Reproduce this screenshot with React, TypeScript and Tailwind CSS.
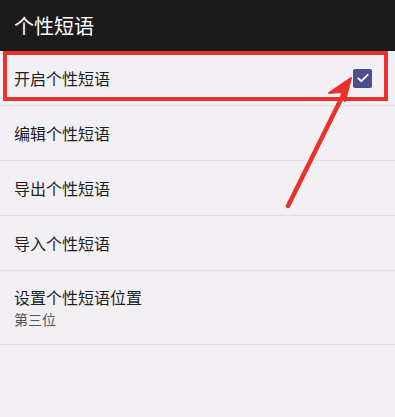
import React from 'react';

const font = { fontFamily: '"Noto Sans CJK SC", "Noto Sans", sans-serif' };

type RowProps = {
  title: string;
  sub?: string;
  checked?: boolean;
};

const Row = ({ title, sub, checked }: RowProps) => (
  <div className={`flex items-center justify-between border-b border-[#e3e0e6] pl-[14px] pr-[23px] ${sub ? 'h-[74px]' : 'h-[55px]'}`}>
    <div className="flex flex-col">
      <p className="text-[16px] leading-[23px] text-[#1f1f1f]">{title}</p>
      {sub && <p className="text-[14px] leading-[20px] text-[#555]">{sub}</p>}
    </div>
    {checked && (
      <div className="flex h-[19px] w-[19px] items-center justify-center rounded-[2px] bg-[#4b4f8e]">
        <svg width="14" height="14" viewBox="0 0 24 24" fill="none" stroke="#fff" strokeWidth="3.2" strokeLinecap="round" strokeLinejoin="round">
          <path d="M4 12.5l5 5L20 6.5" />
        </svg>
      </div>
    )}
  </div>
);

const App = () => {
  const rows: RowProps[] = [
    { title: '开启个性短语', checked: true },
    { title: '编辑个性短语' },
    { title: '导出个性短语' },
    { title: '导入个性短语' },
    { title: '设置个性短语位置', sub: '第三位' },
  ];

  return (
    <div className="relative h-[417px] w-[395px] overflow-hidden bg-[#f2f0f4]" style={font}>
      <div className="flex h-[51px] items-center bg-[#1b1b1b] pl-[14px]">
        <h1 className="text-[20px] leading-none text-white">个性短语</h1>
      </div>
      {rows.map((row) => (
        <Row key={row.title} {...row} />
      ))}
      {/* annotation: red box + arrow */}
      <div className="absolute left-[3px] top-[51px] h-[50px] w-[385px] border-[4px] border-[#e8322b]" />
      <svg className="absolute left-0 top-0" width="395" height="417" viewBox="0 0 395 417">
        <line x1="288" y1="206" x2="347" y2="87" stroke="#e8322b" strokeWidth="4.5" strokeLinecap="round" />
        <path d="M351 78 L329 93 L341 92 L345 101 Z" fill="#e8322b" stroke="#e8322b" strokeWidth="2" strokeLinejoin="round" />
      </svg>
    </div>
  );
};

export default App;
